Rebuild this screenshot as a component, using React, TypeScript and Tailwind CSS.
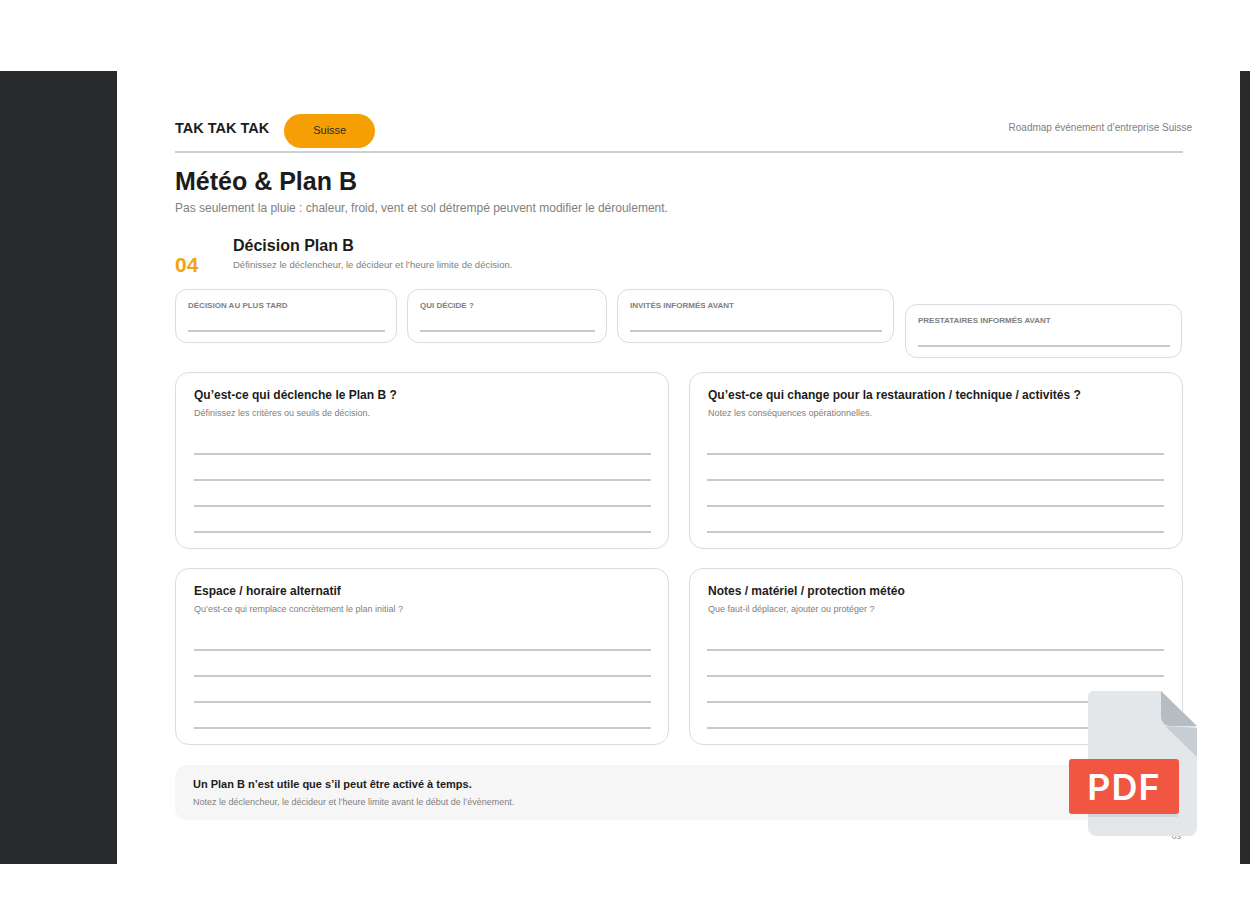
const FONT = "font-['Liberation_Sans',Arial,sans-serif]";

function FieldCard({ label, className }: { label: string; className: string }) {
  return (
    <div className={`h-[54px] rounded-[12px] border border-[#dcdcdc] pl-[12px] pr-[11px] pt-[11px] ${className}`}>
      <div className="text-[8px] leading-[10px] font-bold text-[#808080]">{label}</div>
      <div className="mt-[19px] h-[2px] bg-[#c9c9c9]" />
    </div>
  );
}

function WriteCard({ title, hint, right }: { title: string; hint: string; right?: boolean }) {
  return (
    <div className="h-[177px] flex-1 rounded-[14px] border border-[#dcdcdc] pl-[18px] pr-[17px] pt-[15px]">
      <div className="text-[12px] leading-[14px] font-bold text-[#1c1c1c]">{title}</div>
      <div className="mt-[6px] text-[9px] leading-[11px] text-[#808080]">{hint}</div>
      <div className={`mt-[34px] flex flex-col gap-[24px] ${right ? "-ml-px mr-px" : ""}`}>
        {[0, 1, 2, 3].map((i) => (
          <div key={i} className="h-[2px] bg-[#c9c9c9]" />
        ))}
      </div>
    </div>
  );
}

function PdfIcon() {
  return (
    <svg viewBox="0 0 130 148" className="absolute left-[1068px] top-[690px] h-[148px] w-[130px]">
      <path d="M25 1h68l36 37v100a8 8 0 0 1-8 8H28a8 8 0 0 1-8-8V7a6 6 0 0 1 5-6z" fill="#e4e7e9" />
      <path d="M97 36l32 31V38z" fill="#c6ced3" />
      <path d="M93 1v26a9 9 0 0 0 9 9h27z" fill="#b5bcc2" />
      <path d="M20 124h90v3H20z" fill="#d0d6db" />
      <rect x="1" y="69" width="110" height="55" rx="3" fill="#f15642" />
      <text x="56" y="110" textAnchor="middle" fill="#ffffff" fontSize="36" fontWeight="600" letterSpacing="1" fontFamily="Inter, 'Liberation Sans', sans-serif">
        PDF
      </text>
    </svg>
  );
}

export default function App() {
  return (
    <div className={`relative h-[900px] overflow-hidden bg-white pt-[71px] ${FONT}`}>
      <div className="flex h-[793px]">
        <div className="w-[117px] bg-[#282a2c]" />
        <div className="flex-1 bg-white pl-[58px] pr-[57px] pt-[43px]">
          <div className="flex h-[39px] items-start justify-between border-b-2 border-[#d0d0d0]">
            <div className="flex items-start">
              <span className="mt-[5px] text-[14.5px] leading-[18px] font-bold text-[#1c1c1c]">TAK TAK TAK</span>
              <span className="ml-[15px] flex h-[34px] w-[91px] items-center justify-center rounded-[17px] bg-[#f59f05] pb-[2px] text-[11px] text-[#2a2a2a]">
                Suisse
              </span>
            </div>
            <span className="mr-[-9px] mt-[7px] text-[10px] leading-[13px] text-[#808080]">
              Roadmap événement d’entreprise Suisse
            </span>
          </div>

          <h1 className="mt-[13px] text-[25px] leading-[30px] font-bold text-[#1c1c1c]">Météo &amp; Plan B</h1>
          <p className="mt-[5px] text-[12px] leading-[15px] text-[#808080]">
            Pas seulement la pluie : chaleur, froid, vent et sol détrempé peuvent modifier le déroulement.
          </p>

          <div className="mt-[20px] flex items-end">
            <span className="mb-[-5px] w-[58px] text-[21px] leading-[24px] font-bold text-[#f0a314]">04</span>
            <div className="mb-[1px]">
              <h2 className="text-[16px] leading-[19px] font-bold text-[#1c1c1c]">Décision Plan B</h2>
              <p className="mt-[4px] text-[9.5px] leading-[12px] text-[#808080]">
                Définissez le déclencheur, le décideur et l’heure limite de décision.
              </p>
            </div>
          </div>

          <div className="mt-[17px] flex items-start gap-[10px]">
            <FieldCard label="DÉCISION AU PLUS TARD" className="w-[222px]" />
            <FieldCard label="QUI DÉCIDE ?" className="w-[200px]" />
            <FieldCard label="INVITÉS INFORMÉS AVANT" className="w-[277px]" />
            <FieldCard label="PRESTATAIRES INFORMÉS AVANT" className="ml-px mt-[15px] w-[277px]" />
          </div>

          <div className="mt-[14px] flex gap-[20px]">
            <WriteCard
              title="Qu’est-ce qui déclenche le Plan B ?"
              hint="Définissez les critères ou seuils de décision."
            />
            <WriteCard
              title="Qu’est-ce qui change pour la restauration / technique / activités ?"
              hint="Notez les conséquences opérationnelles."
              right
            />
          </div>
          <div className="mt-[19px] flex gap-[20px]">
            <WriteCard
              title="Espace / horaire alternatif"
              hint="Qu’est-ce qui remplace concrètement le plan initial ?"
            />
            <WriteCard
              title="Notes / matériel / protection météo"
              hint="Que faut-il déplacer, ajouter ou protéger ?"
              right
            />
          </div>

          <div className="mt-[20px] h-[55px] rounded-[12px] bg-[#f6f6f6] pl-[18px] pt-[13px]">
            <div className="text-[11px] leading-[13px] font-bold text-[#1c1c1c]">
              Un Plan B n’est utile que s’il peut être activé à temps.
            </div>
            <div className="mt-[6px] text-[9px] leading-[11px] text-[#808080]">
              Notez le déclencheur, le décideur et l’heure limite avant le début de l’évènement.
            </div>
          </div>
        </div>
        <div className="w-[10px] bg-[#282a2c]" />
      </div>
      <span className="absolute left-[1172px] top-[832px] text-[8px] leading-[10px] text-[#808080]">03</span>
      <PdfIcon />
    </div>
  );
}
